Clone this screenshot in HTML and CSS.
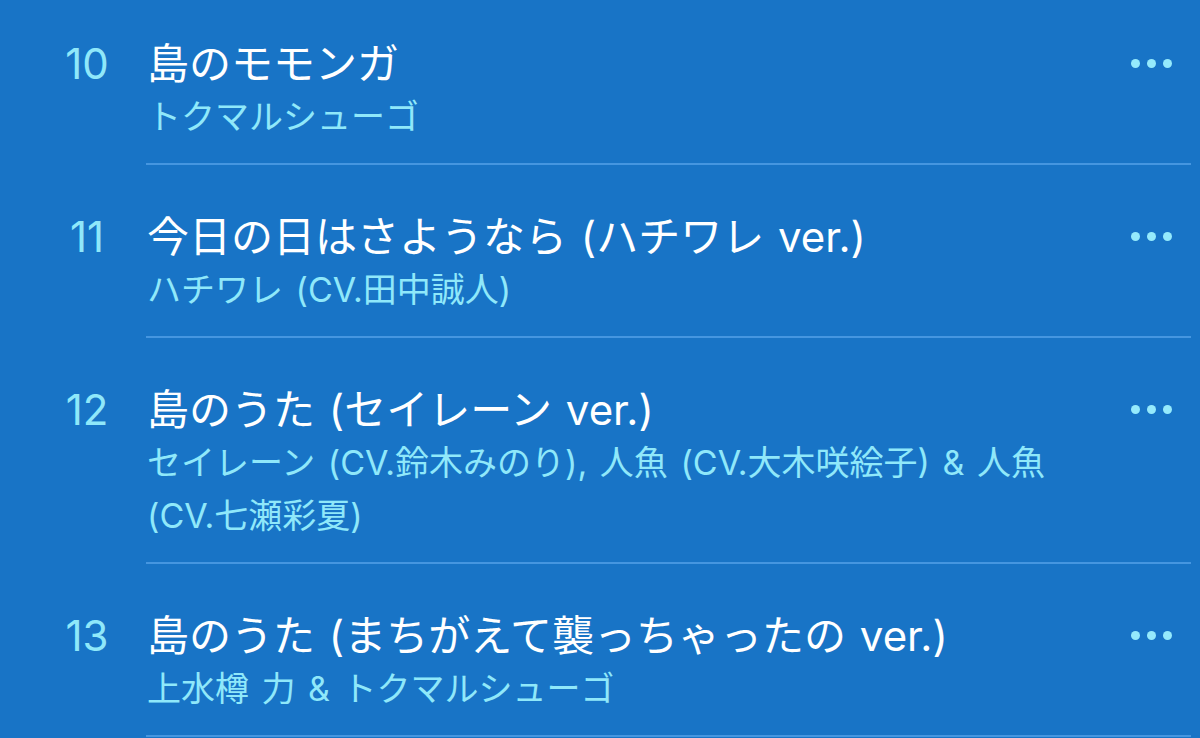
FILE: index.html
```html
<!DOCTYPE html>
<html lang="ja">
<head>
    <meta charset="UTF-8">
    <meta name="viewport" content="width=device-width, initial-scale=1.0">
    <title>トラックリスト</title>
    <link rel="stylesheet" href="styles.css">
</head>
<body>
    <ul class="track-list">
        <li class="track">
            <div class="track-num">10</div>
            <div class="track-main">
                <div class="track-info">
                    <div class="track-title">島のモモンガ</div>
                    <div class="track-artist">トクマルシューゴ</div>
                </div>
                <div class="more-btn"><span></span><span></span><span></span></div>
            </div>
        </li>
        <li class="track">
            <div class="track-num">11</div>
            <div class="track-main">
                <div class="track-info">
                    <div class="track-title">今日の日はさようなら (ハチワレ ver.)</div>
                    <div class="track-artist">ハチワレ (CV.田中誠人)</div>
                </div>
                <div class="more-btn"><span></span><span></span><span></span></div>
            </div>
        </li>
        <li class="track">
            <div class="track-num">12</div>
            <div class="track-main">
                <div class="track-info">
                    <div class="track-title">島のうた (セイレーン ver.)</div>
                    <div class="track-artist">セイレーン (CV.鈴木みのり), 人魚 (CV.大木咲絵子) &amp; 人魚<br>(CV.七瀬彩夏)</div>
                </div>
                <div class="more-btn"><span></span><span></span><span></span></div>
            </div>
        </li>
        <li class="track">
            <div class="track-num">13</div>
            <div class="track-main">
                <div class="track-info">
                    <div class="track-title">島のうた (まちがえて襲っちゃったの ver.)</div>
                    <div class="track-artist">上水樽 力 &amp; トクマルシューゴ</div>
                </div>
                <div class="more-btn"><span></span><span></span><span></span></div>
            </div>
        </li>
    </ul>
</body>
</html>
```

FILE: styles.css
```css
body {
    margin: 0;
    background: #1874c6;
    font-family: 'Inter', 'Noto Sans CJK JP', sans-serif;
    overflow: hidden;
}
.track-list {
    list-style: none;
    margin: 0;
    padding: 0;
}
.track {
    display: flex;
    padding: 45px 0 0 28px;
}
.track:first-child {
    padding-top: 37px;
}
.track-num {
    width: 118px;
    flex-shrink: 0;
    text-align: center;
    color: #8fe8fa;
    font-size: 42px;
    line-height: 53px;
}
.track-main {
    flex: 1;
    display: flex;
    margin-right: 9px;
    padding-bottom: 20px;
    border-bottom: 2px solid #4596e0;
}
.track-info {
    flex: 1;
    min-width: 0;
    padding-left: 1px;
}
.track-title {
    color: #fff;
    font-size: 42px;
    line-height: 53px;
    word-spacing: 2px;
    white-space: nowrap;
}
.track-artist {
    color: #8fe8fa;
    font-size: 34px;
    line-height: 53px;
    word-spacing: 3px;
}
.more-btn {
    display: flex;
    align-items: center;
    gap: 7px;
    height: 53px;
    padding: 0 19px 0 20px;
}
.more-btn span {
    width: 9px;
    height: 9px;
    border-radius: 50%;
    background: #95eafc;
}
```
